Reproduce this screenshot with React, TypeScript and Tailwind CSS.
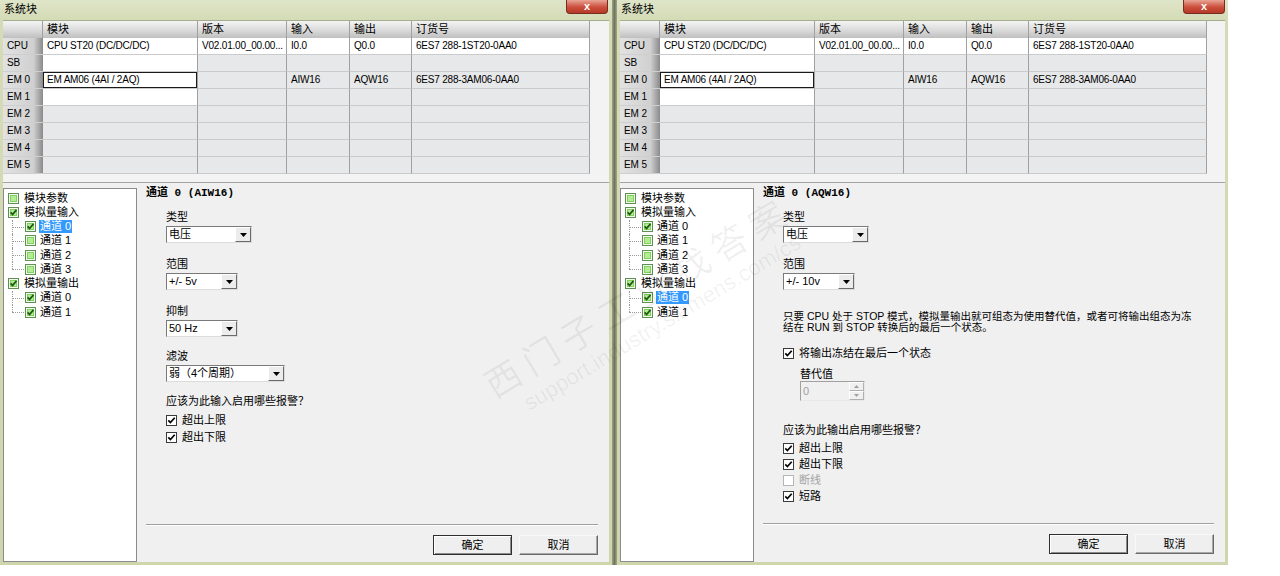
import React from "react";

type Cell = { text?: string; white?: boolean; focus?: boolean };

const COLS = "grid grid-cols-[40px_155px_89px_63px_62px_178px]";

const rows: { h: string; cells: Cell[] }[] = [
  {
    h: "CPU",
    cells: [
      { text: "CPU ST20 (DC/DC/DC)", white: true },
      { text: "V02.01.00_00.00...", white: true },
      { text: "I0.0", white: true },
      { text: "Q0.0", white: true },
      { text: "6ES7 288-1ST20-0AA0", white: true },
    ],
  },
  { h: "SB", cells: [{ white: true }, {}, {}, {}, {}] },
  {
    h: "EM 0",
    cells: [
      { text: "EM AM06 (4AI / 2AQ)", white: true, focus: true },
      {},
      { text: "AIW16" },
      { text: "AQW16" },
      { text: "6ES7 288-3AM06-0AA0" },
    ],
  },
  { h: "EM 1", cells: [{ white: true }, {}, {}, {}, {}] },
  { h: "EM 2", cells: [{}, {}, {}, {}, {}] },
  { h: "EM 3", cells: [{}, {}, {}, {}, {}] },
  { h: "EM 4", cells: [{}, {}, {}, {}, {}] },
  { h: "EM 5", cells: [{}, {}, {}, {}, {}] },
];

const headers = ["模块", "版本", "输入", "输出", "订货号"];

function Table() {
  return (
    <div className="h-[162px] flex flex-col border-b border-[#a3a3a3] bg-[#f3f3f3]">
      <div className={COLS + " w-max"}>
        <div className="h-[17px] border-r border-[#a0a0a0] bg-[linear-gradient(to_bottom,#f4f4f4,#dadada_55%,#bfbfbf)]" />
        {headers.map((h) => (
          <div
            key={h}
            className="h-[17px] border-r border-[#a0a0a0] bg-[linear-gradient(to_bottom,#f4f4f4,#dadada_55%,#bfbfbf)] pl-[4px] leading-[17px]"
          >
            {h}
          </div>
        ))}
        {rows.map((r) => (
          <React.Fragment key={r.h}>
            <div className="h-[17px] border-b border-[#cfcfcf] bg-[linear-gradient(to_right,#e2e2e2,#d0d0d0_76%,#8a8a8a)] pl-[4px] leading-[16px] text-[10px] tracking-[-0.1px]">
              {r.h}
            </div>
            {r.cells.map((c, i) => (
              <div
                key={i}
                className={
                  "h-[17px] border-r border-b border-r-[#a0a0a0] border-b-[#cbcbcb] pl-[4px] leading-[16px] text-[10px] tracking-[-0.2px] whitespace-nowrap overflow-hidden " +
                  (c.white ? "bg-white " : "bg-[#e7e8e9] ") +
                  (c.focus ? "shadow-[inset_0_0_0_1px_#1a1a1a]" : "")
                }
              >
                {c.text}
              </div>
            ))}
          </React.Fragment>
        ))}
      </div>
    </div>
  );
}

function TreeIcon({ checked }: { checked: boolean }) {
  return (
    <svg width="11" height="11" viewBox="0 0 11 11" className="shrink-0">
      <rect x="0.5" y="0.5" width="10" height="10" fill="#f2f8ee" stroke="#5f8f55" />
      <rect x="2" y="2" width="7" height="7" fill="#7fd35a" />
      <rect x="3" y="3" width="5" height="5" fill="#b4ec95" />
      {checked && (
        <path d="M2.6 5.3 L4.6 7.4 L8.5 2.9" stroke="#1f5a14" strokeWidth="1.7" fill="none" />
      )}
    </svg>
  );
}

type TItem = { label: string; level: number; checked: boolean; last?: boolean };

const tree: TItem[] = [
  { label: "模块参数", level: 0, checked: false },
  { label: "模拟量输入", level: 0, checked: true },
  { label: "通道 0", level: 1, checked: true },
  { label: "通道 1", level: 1, checked: false },
  { label: "通道 2", level: 1, checked: false },
  { label: "通道 3", level: 1, checked: false, last: true },
  { label: "模拟量输出", level: 0, checked: true },
  { label: "通道 0", level: 1, checked: true },
  { label: "通道 1", level: 1, checked: true, last: true },
];

function Tree({ selected }: { selected: number }) {
  return (
    <div className="w-[134px] shrink-0 mt-[5px] bg-white border border-[#8c8c8c] pt-[2px] pl-[4px]">
      {tree.map((t, i) => (
        <div key={i} className="flex items-center h-[14.25px]">
          {t.level === 1 && (
            <div className="relative w-[17px] self-stretch shrink-0">
              <div
                className={
                  "absolute left-[4px] top-0 border-l border-dotted border-[#9a9a9a] " +
                  (t.last ? "h-1/2" : "h-full")
                }
              />
              <div className="absolute left-[4px] top-1/2 w-[12px] border-t border-dotted border-[#9a9a9a]" />
            </div>
          )}
          <TreeIcon checked={t.checked} />
          <span
            className={
              "px-[1px] leading-[13px] whitespace-nowrap " +
              (t.level === 1 ? "ml-[3px] " : "ml-[4px] ") +
              (i === selected ? "bg-[#3399ff] text-white" : "")
            }
          >
            {t.label}
          </span>
        </div>
      ))}
    </div>
  );
}

function Combo({ className, text }: { className: string; text: string }) {
  return (
    <div
      className={
        "flex h-[17px] bg-white border border-t-[#7a7a7a] border-l-[#7a7a7a] border-b-[#dcdcdc] border-r-[#dcdcdc] " +
        className
      }
    >
      <span className="flex-1 pl-[2px] leading-[15px] whitespace-nowrap overflow-hidden">{text}</span>
      <span className="w-[16px] h-full flex items-center justify-center bg-[#ececec] border border-t-white border-l-white border-r-[#6a6a6a] border-b-[#6a6a6a]">
        <svg width="7" height="4" viewBox="0 0 7 4">
          <path d="M0 0 H7 L3.5 4 Z" fill="#000" />
        </svg>
      </span>
    </div>
  );
}

function Check({
  label,
  checked,
  disabled,
  h,
}: {
  label: string;
  checked: boolean;
  disabled?: boolean;
  h: string;
}) {
  return (
    <div className={"flex items-center " + h}>
      <span
        className={
          "w-[11px] h-[11px] flex items-center justify-center bg-white border " +
          (disabled ? "border-[#b5b5b5]" : "border-[#3a3a3a]")
        }
      >
        {checked && (
          <svg width="9" height="9" viewBox="0 0 9 9">
            <path d="M1.3 4.4 L3.4 6.6 L7.7 1.8" stroke="#000" strokeWidth="1.7" fill="none" />
          </svg>
        )}
      </span>
      <span className={"ml-[5px] whitespace-nowrap " + (disabled ? "text-[#a3a3a3]" : "")}>{label}</span>
    </div>
  );
}

function Buttons({ mb }: { mb: string }) {
  return (
    <div className={"flex flex-col " + mb}>
      <div className="ml-[9px] mr-[11px] border-t border-[#a0a0a0] border-b border-b-white" />
      <div className="flex justify-end gap-[7px] mr-[11px] mt-[9px]">
        <div className="w-[79px] h-[20px] flex items-center justify-center bg-[#efefef] border border-[#2f2f2f] shadow-[inset_1px_1px_0_#ffffff,inset_-1px_-1px_0_#8a8a8a]">
          确定
        </div>
        <div className="w-[79px] h-[20px] flex items-center justify-center bg-[#efefef] border border-t-[#f8f8f8] border-l-[#f8f8f8] border-r-[#6a6a6a] border-b-[#6a6a6a] shadow-[inset_-1px_-1px_0_#a8a8a8]">
          取消
        </div>
      </div>
    </div>
  );
}

const TITLE = "h-[14px] leading-[14px] pl-[9px] font-bold font-['Liberation_Mono','Noto_Sans_CJK_SC',monospace] whitespace-nowrap";
const LBL = "h-[14px] leading-[14px] whitespace-nowrap";

function LeftPanel() {
  return (
    <div className="flex-1 flex flex-col pt-[3px]">
      <div className={TITLE}>通道 0 (AIW16)</div>
      <div className="pl-[29px] flex flex-col items-start">
        <div className={"mt-[10px] " + LBL}>类型</div>
        <Combo className="mt-[2px] w-[86px]" text="电压" />
        <div className={"mt-[14px] " + LBL}>范围</div>
        <Combo className="mt-[2px] w-[72px]" text="+/- 5v" />
        <div className={"mt-[14px] " + LBL}>抑制</div>
        <Combo className="mt-[2px] w-[72px]" text="50 Hz" />
        <div className={"mt-[12px] " + LBL}>滤波</div>
        <Combo className="mt-[2px] w-[119px]" text="弱（4个周期）" />
        <div className={"mt-[12px] " + LBL}>应该为此输入启用哪些报警？</div>
        <div className="mt-[4px]">
          <Check h="h-[17px]" label="超出上限" checked />
          <Check h="h-[17px]" label="超出下限" checked />
        </div>
      </div>
      <div className="flex-1" />
      <Buttons mb="mb-[7px]" />
    </div>
  );
}

function RightPanel() {
  return (
    <div className="flex-1 flex flex-col pt-[3px]">
      <div className={TITLE}>通道 0 (AQW16)</div>
      <div className="pl-[29px] flex flex-col items-start">
        <div className={"mt-[10px] " + LBL}>类型</div>
        <Combo className="mt-[2px] w-[86px]" text="电压" />
        <div className={"mt-[14px] " + LBL}>范围</div>
        <Combo className="mt-[2px] w-[72px]" text="+/- 10v" />
        <div className="mt-[21px] text-[10.5px] leading-[11px] whitespace-nowrap">
          <div>只要 CPU 处于 STOP 模式，模拟量输出就可组态为使用替代值，或者可将输出组态为冻</div>
          <div>结在 RUN 到 STOP 转换后的最后一个状态。</div>
        </div>
        <div className="mt-[13px]">
          <Check h="h-[14px]" label="将输出冻结在最后一个状态" checked />
        </div>
        <div className="pl-[17px] flex flex-col items-start">
          <div className="mt-[8px] h-[13px] leading-[13px]">替代值</div>
          <div className="flex w-[65px] h-[20px] bg-[#f0f0f0] border border-t-[#a0a0a0] border-l-[#a0a0a0] border-b-[#e8e8e8] border-r-[#e8e8e8]">
            <span className="flex-1 pl-[2px] leading-[18px] text-[#a0a0a0]">0</span>
            <div className="w-[15px] flex flex-col">
              <span className="flex-1 flex items-center justify-center border border-t-white border-l-white border-r-[#b0b0b0] border-b-[#b0b0b0]">
                <svg width="5" height="3" viewBox="0 0 5 3">
                  <path d="M0 3 H5 L2.5 0 Z" fill="#a0a0a0" />
                </svg>
              </span>
              <span className="flex-1 flex items-center justify-center border border-t-white border-l-white border-r-[#b0b0b0] border-b-[#b0b0b0]">
                <svg width="5" height="3" viewBox="0 0 5 3">
                  <path d="M0 0 H5 L2.5 3 Z" fill="#a0a0a0" />
                </svg>
              </span>
            </div>
          </div>
        </div>
        <div className={"mt-[22px] " + LBL}>应该为此输出启用哪些报警？</div>
        <div className="mt-[3px]">
          <Check h="h-[16px]" label="超出上限" checked />
          <Check h="h-[16px]" label="超出下限" checked />
          <Check h="h-[16px]" label="断线" checked={false} disabled />
          <Check h="h-[16px]" label="短路" checked />
        </div>
      </div>
      <div className="flex-1" />
      <Buttons mb="mb-[8px]" />
    </div>
  );
}

function Window({ side }: { side: "left" | "right" }) {
  const isLeft = side === "left";
  return (
    <div
      className={
        "relative h-[565px] shrink-0 flex flex-col bg-[linear-gradient(to_bottom,#dfe5c8,#d4dbb6_20px,#cfd6ae)] " +
        (isLeft ? "w-[612px]" : "w-[611px]")
      }
    >
      <div className="h-[20px] flex items-center pl-[4px] pb-[2px] whitespace-nowrap">系统块</div>
      <div
        className={
          "absolute top-0 w-[42px] h-[14px] rounded-b-[4px] border border-t-0 border-[#7a2b1f] bg-[linear-gradient(to_bottom,#e9a596,#cc4e3c_55%,#b53a27)] flex items-center justify-center text-white text-[11px] font-bold leading-none " +
          (isLeft ? "right-[4px]" : "right-[3px]")
        }
      >
        x
      </div>
      <div className="flex-1 flex flex-col mx-[3px] mb-[3px] bg-[#f0f0f0] border-t border-[#a6ad8e]">
        <Table />
        <div className="flex-1 flex">
          <Tree selected={isLeft ? 2 : 7} />
          {isLeft ? <LeftPanel /> : <RightPanel />}
        </div>
      </div>
    </div>
  );
}

export default function App() {
  return (
    <div className="relative w-[1280px] h-[576px] bg-white overflow-hidden flex items-start text-[11px] text-black font-['Liberation_Sans','Noto_Sans_CJK_SC',sans-serif]">
      <Window side="left" />
      <div className="w-[5px] h-[565px] shrink-0 bg-[linear-gradient(to_right,#9ea386,#6f745e,#a4a98c)]" />
      <Window side="right" />
      <div className="pointer-events-none absolute left-[478px] top-[372px] origin-top-left -rotate-[31deg] text-black/[0.06] whitespace-nowrap">
        <div className="text-[36px] leading-[40px] tracking-[8px]">西门子工业找答案</div>
        <div className="text-[22px] leading-[26px] pl-[24px]">support.industry.siemens.com/cs</div>
      </div>
    </div>
  );
}
